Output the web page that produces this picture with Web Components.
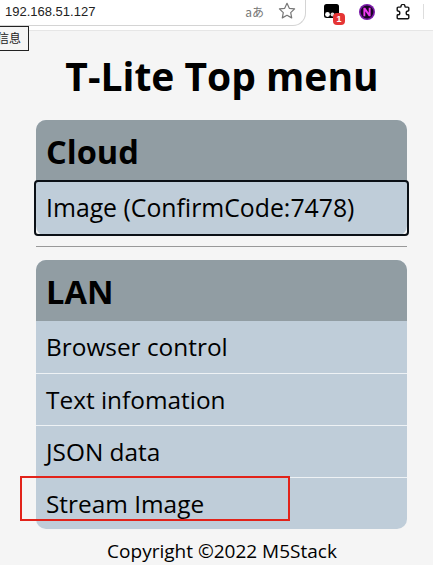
<!DOCTYPE html>
<html>
<head>
<meta charset="utf-8">
<title>T-Lite Top menu</title>
<style>
  html, body { margin: 0; padding: 0; height: 565px; overflow: hidden; background: #f5f5f5; }
  body { font-family: "Open Sans", "Noto Sans", sans-serif; }
</style>
</head>
<body>
<browser-bar></browser-bar>
<top-menu>
  <menu-group title="Cloud">
    <menu-item focused>Image (ConfirmCode:7478)</menu-item>
  </menu-group>
  <menu-group title="LAN" slot="second">
    <menu-item>Browser control</menu-item>
    <menu-item>Text infomation</menu-item>
    <menu-item>JSON data</menu-item>
    <menu-item>Stream Image</menu-item>
  </menu-group>
</top-menu>
<red-box></red-box>
<script>
class BrowserBar extends HTMLElement {
  constructor() {
    super();
    this.attachShadow({ mode: 'open' });
  }
  connectedCallback() {
    this.shadowRoot.innerHTML = `
      <style>
        :host {
          display: flex;
          align-items: flex-start;
          position: relative;
          height: 30px;
          background: #fff;
          border-bottom: 1px solid #e6e6e6;
        }
        .omni {
          flex: 0 0 306px;
          height: 26px;
          box-sizing: border-box;
          display: flex;
          align-items: center;
          padding: 0 0 3px 5px;
          font: 13px "Liberation Sans", Arial, sans-serif;
          color: #222;
          border: 1px solid #d4d4d4;
          border-left: 0;
          border-top: 0;
          border-radius: 0 0 13px 0;
        }
        .url { flex: 1; }
        .translate { font: 12px "Noto Sans CJK JP", sans-serif; color: #777; margin-right: 14px; }
        .omni svg { margin-right: 9px; }
        .tools { display: flex; align-items: flex-start; padding: 4px 0 0 18px; }
        .tools svg { display: block; }
        .ext { position: relative; width: 15px; height: 14px; margin-right: 20px; }
        .n { margin-right: 20px; }
        .badge {
          position: absolute; left: 9px; top: 9px;
          width: 12px; height: 12px; border-radius: 4px;
          background: #e53535; color: #fff;
          font: bold 9px/12px "Liberation Sans", sans-serif; text-align: center;
        }
        .end { position: absolute; left: 423px; top: 4px; width: 1px; height: 15px; background: #ddd; }
        .tip {
          position: absolute; left: -5px; top: 26px;
          height: 25px; width: 34px; box-sizing: border-box;
          border: 1px solid #222; background: #f5f5f5;
          font: 12px/22px "Noto Sans CJK SC", sans-serif; color: #222;
          padding-left: 1px; white-space: nowrap;
        }
      </style>
      <div class="omni">
        <span class="url">192.168.51.127</span>
        <span class="translate">aあ</span>
        <svg width="18" height="18" viewBox="0 0 18 18"><path d="M9 1.300l2.300 5 5.300.6-3.900 3.700 1 5.300L9 13.300l-4.700 2.600 1-5.300L1.400 6.900l5.300-.6z" fill="none" stroke="#777" stroke-width="1.200" stroke-linejoin="round"/></svg>
      </div>
      <div class="tools">
        <div class="ext">
          <svg width="15" height="14" viewBox="0 0 15 14"><rect width="15" height="14" rx="2.500" fill="#000"/><circle cx="3.500" cy="10.500" r="2.400" fill="#fff"/><circle cx="8.500" cy="10.500" r="2" fill="#ddd"/></svg>
          <span class="badge">1</span>
        </div>
        <svg class="n" width="16" height="16" viewBox="0 0 16 16"><circle cx="8" cy="8" r="8" fill="#7a18a8"/><circle cx="8" cy="8" r="6.400" fill="#1a0624"/><path d="M4.400 12.300V3.700h1.900l3.400 5V3.700h1.900v8.600H9.800L6.300 7.200v5.100z" fill="#ee3cf0"/></svg>
        <svg width="16" height="16" viewBox="0 0 16 16"><path d="M6 2.400a2 2 0 0 1 4 0c0 .5.300.7.700.7h2.100c.6 0 1 .4 1 1v2.200c0 .4-.3.7-.7.7a1.900 1.900 0 0 0 0 3.800c.4 0 .7.300.7.700v2.200c0 .6-.4 1-1 1H3.200c-.6 0-1-.4-1-1v-2.200c0-.4.300-.7.700-.7a1.900 1.900 0 0 0 0-3.800c-.4 0-.7-.3-.7-.7V4.100c0-.6.400-1 1-1h2.100c.4 0 .7-.2.700-.7z" fill="none" stroke="#111" stroke-width="1.400" stroke-linejoin="round"/></svg>
      </div>
      <div class="end"></div>
      <div class="tip">信息</div>
    `;
  }
}

class TopMenu extends HTMLElement {
  constructor() {
    super();
    this.attachShadow({ mode: 'open' });
  }
  connectedCallback() {
    this.shadowRoot.innerHTML = `
      <style>
        :host { display: block; color: #000; }
        h1 {
          margin: 0;
          padding: 18px 0 0 11px;
          height: 71px;
          font: bold 39px/54px "Open Sans", sans-serif;
          text-align: center;
        }
        .wrap { padding: 0 26px 0 36px; }
        hr { border: 0; border-top: 1px solid #999; margin: 12px 0 13px; }
        footer { font: 19px/24px "Open Sans", sans-serif; text-align: center; padding: 10px 0 0 11px; }
      </style>
      <h1>T-Lite Top menu</h1>
      <div class="wrap">
        <slot></slot>
        <hr>
        <slot name="second"></slot>
      </div>
      <footer>Copyright ©2022 M5Stack</footer>
    `;
  }
}

class MenuGroup extends HTMLElement {
  constructor() {
    super();
    this.attachShadow({ mode: 'open' });
  }
  connectedCallback() {
    this.shadowRoot.innerHTML = `
      <style>
        :host { display: block; border-radius: 10px; background: #bfcdd9; }
        h2 {
          margin: 0;
          height: 61px;
          padding-left: 10px;
          background: #919da3;
          border-radius: 10px 10px 0 0;
          font: bold 32.6px/64px "Open Sans", sans-serif;
        }
      </style>
      <h2>${this.getAttribute('title')}</h2>
      <slot></slot>
    `;
  }
}

class MenuItem extends HTMLElement {
  constructor() {
    super();
    this.attachShadow({ mode: 'open' });
  }
  connectedCallback() {
    this.shadowRoot.innerHTML = `
      <style>
        :host {
          display: block;
          height: 52px;
          box-sizing: border-box;
          padding-left: 10px;
          font: 24.4px/51px "Open Sans", sans-serif;
          color: #000;
          border-top: 1px solid #eef2f5;
        }
        :host(:first-of-type) { border-top: 0; }
        :host(:last-child) { border-radius: 0 0 10px 10px; }
        :host([focused]) {
          position: relative;
          margin: -1px -2px -2px;
          height: 56px;
          border: 2px solid #0b1016;
          border-radius: 4px;
          font-size: 24.8px;
          line-height: 51px;
        }
      </style>
      <slot></slot>
    `;
  }
}

class RedBox extends HTMLElement {
  constructor() {
    super();
    this.attachShadow({ mode: 'open' });
  }
  connectedCallback() {
    this.shadowRoot.innerHTML = `
      <style>
        :host {
          position: absolute;
          left: 20px; top: 476px;
          width: 270px; height: 45px;
          box-sizing: border-box;
          border: 2px solid #e2231a;
          pointer-events: none;
        }
      </style>
    `;
  }
}

customElements.define('browser-bar', BrowserBar);
customElements.define('top-menu', TopMenu);
customElements.define('menu-group', MenuGroup);
customElements.define('menu-item', MenuItem);
customElements.define('red-box', RedBox);
</script>
</body>
</html>
